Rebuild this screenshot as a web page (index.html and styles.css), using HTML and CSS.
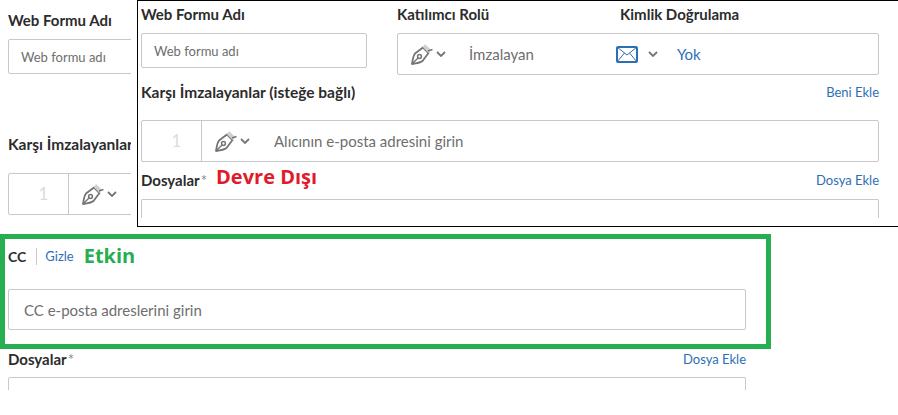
FILE: index.html
```html
<!DOCTYPE html>
<html lang="tr">
<head>
    <meta charset="UTF-8">
    <title>Web Formu</title>
    <link rel="stylesheet" href="styles.css">
</head>
<body>
    <svg class="icon-defs" width="0" height="0">
        <symbol id="pen" viewBox="0 0 22 22">
            <path d="M1 21 C2 16 2 13 4 10.5 L12 4.5 L17.5 10 L11.5 18 C9 20 5 20.5 1 21 Z" fill="none" stroke="currentColor" stroke-width="1.8" stroke-linejoin="round"/>
            <path d="M1 21 L7 15" stroke="currentColor" stroke-width="1.5"/>
            <circle cx="8.5" cy="13.5" r="1.9" fill="none" stroke="currentColor" stroke-width="1.5"/>
            <path d="M12 4.5 L14 1 L19.5 6.5 L17.5 10 Z" fill="#cfcfcf"/>
            <path d="M17 8 L21.5 6.5" stroke="currentColor" stroke-width="1.5"/>
        </symbol>
        <symbol id="chevron" viewBox="0 0 10 6">
            <path d="M1 1 L5 5 L9 1" fill="none" stroke="currentColor" stroke-width="1.8"/>
        </symbol>
    </svg>

    <!-- enabled state -->
    <div class="page">
        <div class="label first-label">Web Formu Adı</div>
        <div class="field name-field"><span class="hint hint-small">Web formu adı</span></div>

        <div class="label wide-label signer-label">Karşı İmzalayanlar</div>
        <div class="field signer-row">
            <div class="num">1</div>
            <div class="role">
                <svg class="pen"><use href="#pen"/></svg>
                <svg class="chev"><use href="#chevron"/></svg>
            </div>
        </div>

        <div class="cc-frame">
            <div class="cc-head">
                <span class="cc-title">CC</span>
                <a class="link cc-hide">Gizle</a>
                <span class="note note-on">Etkin</span>
            </div>
            <div class="field cc-field"><span class="hint cc-hint">CC e-posta adreslerini girin</span></div>
        </div>

        <div class="files-lower">
            <div class="label-row">
                <div class="label">Dosyalar<span class="req">*</span></div>
                <a class="link">Dosya Ekle</a>
            </div>
            <div class="file-box lower-box"></div>
        </div>
    </div>

    <!-- disabled state, pasted over the page -->
    <div class="overlay">
        <div class="top-row">
            <div class="name-col">
                <div class="label">Web Formu Adı</div>
                <div class="field over-name"><span class="hint hint-small">Web formu adı</span></div>
            </div>
            <div class="role-col">
                <div class="role-labels">
                    <div class="label role-title">Katılımcı Rolü</div>
                    <div class="label">Kimlik Doğrulama</div>
                </div>
                <div class="field role-field">
                    <svg class="pen"><use href="#pen"/></svg>
                    <svg class="chev"><use href="#chevron"/></svg>
                    <span class="hint role-name">İmzalayan</span>
                    <svg class="mail" viewBox="0 0 22 17">
                        <rect x="1" y="1" width="20" height="15" rx="1" fill="#fff" stroke="#2d6fb5" stroke-width="2"/>
                        <path d="M1 1 L11 9 L21 1 M1 16 L8.5 7 M21 16 L13.5 7" fill="none" stroke="#2d6fb5" stroke-width="1"/>
                    </svg>
                    <svg class="chev chev-auth"><use href="#chevron"/></svg>
                    <a class="link auth-value">Yok</a>
                </div>
            </div>
        </div>

        <div class="label-row signer-head">
            <div class="label wide-label">Karşı İmzalayanlar (isteğe bağlı)</div>
            <a class="link">Beni Ekle</a>
        </div>
        <div class="field signer-row over-signer">
            <div class="num">1</div>
            <div class="role">
                <svg class="pen"><use href="#pen"/></svg>
                <svg class="chev"><use href="#chevron"/></svg>
            </div>
            <span class="hint signer-hint">Alıcının e-posta adresini girin</span>
        </div>

        <div class="label-row files-head">
            <div class="label">Dosyalar<span class="req">*</span><span class="note note-off">Devre Dışı</span></div>
            <a class="link">Dosya Ekle</a>
        </div>
        <div class="file-box over-box"></div>
    </div>
</body>
</html>
```

FILE: styles.css
```css
* {
    margin: 0;
    padding: 0;
    box-sizing: border-box;
}

body {
    position: relative;
    width: 898px;
    height: 415px;
    overflow: hidden;
    background: white;
    font-family: "Lato", "Liberation Sans", sans-serif;
    font-size: 14px;
    color: #2c2c2c;
}

.icon-defs {
    position: absolute;
}

.label {
    font-size: 15px;
    font-weight: 700;
    line-height: 20px;
    color: #2c2c2c;
}

.wide-label {
    font-size: 15.5px;
}

.label-row {
    display: flex;
    justify-content: space-between;
    align-items: center;
}

.link {
    font-size: 13px;
    color: #2d6fb5;
}

.hint {
    font-size: 15px;
    color: #6e6e6e;
}

.hint-small {
    font-size: 13px;
}

.req {
    margin-left: 1px;
    font-weight: 400;
    color: #8a8a8a;
}

.note {
    font-family: "Open Sans", sans-serif;
    font-weight: 700;
    font-size: 20px;
    line-height: 0;
}

.note-off {
    margin-left: 9px;
    color: #e01b2b;
    vertical-align: 2px;
}

.note-on {
    margin-left: 10px;
    color: #27ae50;
}

.field {
    display: flex;
    align-items: center;
    background: white;
    border: 1px solid #c8c8c8;
    border-radius: 2px;
}

.page {
    padding-top: 10px;
}

.first-label,
.signer-label,
.name-field,
.page > .signer-row {
    margin-left: 8px;
}

.name-field {
    width: 300px;
    height: 35px;
    margin-top: 9px;
    padding-left: 12px;
}

.signer-label {
    margin-top: 60px;
}

.signer-row {
    height: 42px;
}

.page > .signer-row {
    width: 300px;
    margin-top: 19px;
}

.num {
    width: 60px;
    height: 100%;
    padding-left: 10px;
    line-height: 40px;
    text-align: center;
    font-size: 17px;
    color: #dcdcdc;
    border-right: 1px solid #c8c8c8;
}

.role {
    display: flex;
    align-items: center;
    padding-left: 13px;
}

.pen {
    width: 22px;
    height: 22px;
    color: #757575;
}

.chev {
    width: 10px;
    height: 6px;
    margin-left: 3px;
    color: #757575;
}

.cc-frame {
    width: 771px;
    height: 115px;
    margin-top: 19px;
    padding: 7px 20px 0 3px;
    border: 5px solid #27ae50;
}

.cc-head {
    display: flex;
    align-items: center;
    height: 20px;
}

.cc-title {
    font-weight: 700;
    font-size: 14px;
    padding-right: 10px;
    border-right: 1px solid #c8c8c8;
}

.cc-hide {
    margin-left: 8px;
}

.cc-field {
    height: 41px;
    margin-top: 23px;
    padding-left: 15px;
}

.files-lower {
    width: 738px;
    margin-left: 8px;
}

.file-box {
    height: 19px;
    border: 1px solid #c8c8c8;
    border-bottom: 0;
    border-radius: 2px 2px 0 0;
}

.lower-box {
    height: 13px;
    margin-top: 8px;
}

.overlay {
    position: absolute;
    left: 137px;
    top: 0;
    width: 761px;
    height: 227px;
    padding: 3px 19px 0 3px;
    background: white;
    border-top: 1px solid black;
    border-bottom: 1px solid black;
    border-left: 1px solid black;
    box-shadow: -6px 0 0 white;
}

.top-row {
    display: flex;
}

.name-col {
    width: 226px;
}

.over-name {
    height: 35px;
    margin-top: 9px;
    padding-left: 12px;
}

.role-col {
    width: 482px;
    margin-left: 30px;
}

.role-labels {
    display: flex;
}

.role-title {
    width: 223px;
}

.role-field {
    height: 42px;
    margin-top: 9px;
    padding-left: 13px;
}

.role-name {
    margin-left: 23px;
}

.mail {
    width: 22px;
    height: 17px;
    margin-left: 82px;
}

.chev-auth {
    margin-left: 10px;
}

.auth-value {
    margin-left: 19px;
    font-size: 15px;
}

.signer-head {
    margin-top: 7px;
}

.over-signer {
    margin-top: 18px;
}

.signer-hint {
    margin-left: 24px;
}

.files-head {
    height: 20px;
    margin-top: 8px;
}

.over-box {
    margin-top: 9px;
}
```
